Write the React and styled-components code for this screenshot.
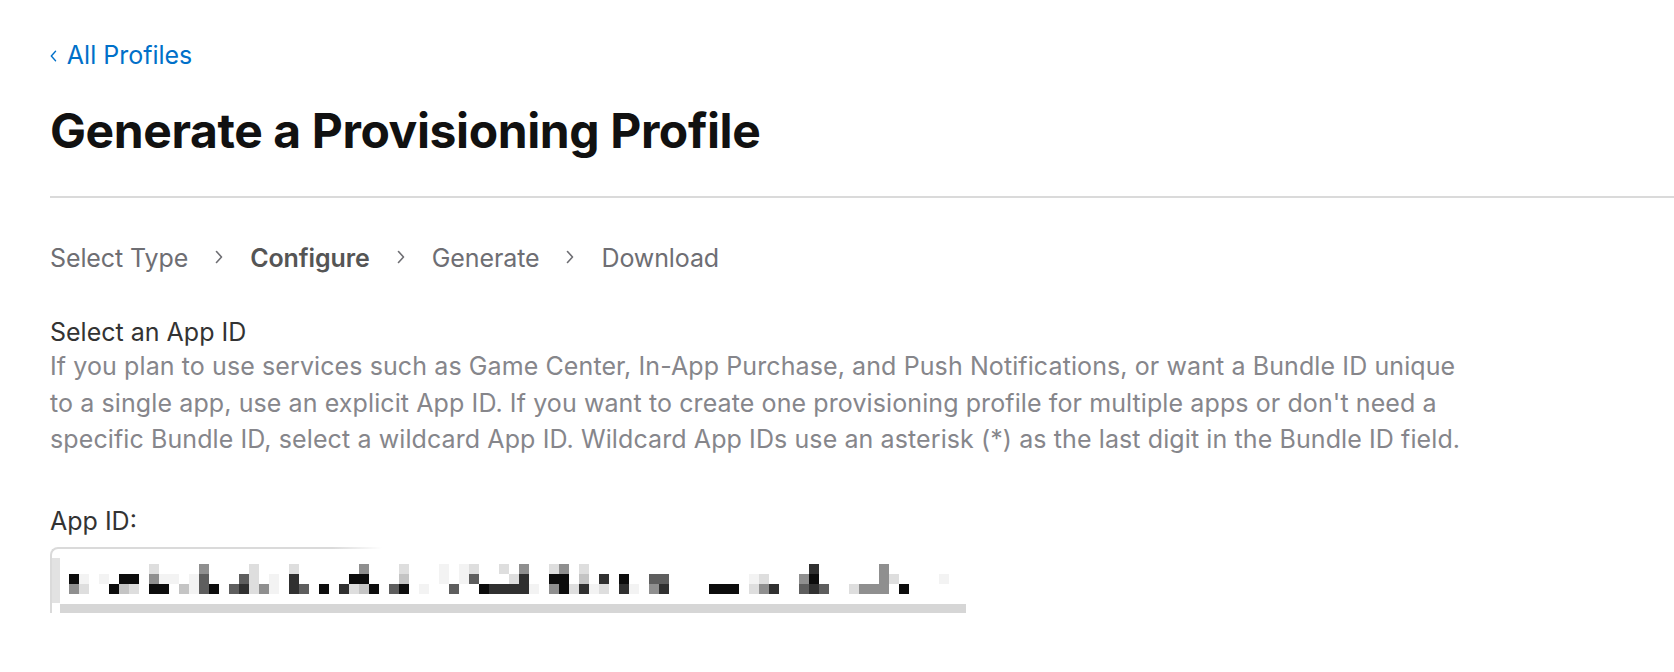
import React from "react"
import styled, { createGlobalStyle } from "styled-components"

const GlobalStyle = createGlobalStyle`
  html, body {
    margin: 0;
    padding: 0;
    background: #fff;
  }
  body {
    font-family: Inter, "Noto Sans", "Liberation Sans", sans-serif;
    -webkit-font-smoothing: antialiased;
  }
`

let Page = styled.main`
  padding: 42px 0 40px 50px;
`

let BackLink = styled.a`
  display: flex;
  align-items: center;
  gap: 10px;
  font-size: 25px;
  line-height: 26px;
  color: #0070c9;
  text-decoration: none;

  svg {
    margin-top: 2px;
  }
`

let Title = styled.h1`
  margin: 35px 0 0 0;
  font-size: 48px;
  line-height: 56px;
  font-weight: 700;
  color: #111;
  letter-spacing: -0.4px;
`

let Divider = styled.hr`
  margin: 37px 0 0 0;
  border: none;
  height: 2px;
  background: #dadada;
`

let Steps = styled.ol`
  display: flex;
  align-items: center;
  gap: 27px;
  margin: 44px 0 0 0;
  padding: 0;
  list-style: none;
`

let Step = styled.li`
  font-size: 25px;
  line-height: 32px;
  letter-spacing: -0.1px;
  color: ${p => p.$active ? "#555" : "#6e6e73"};
  font-weight: ${p => p.$active ? 600 : 400};
`

let Section = styled.section`
  margin-top: 43px;
`

let Label = styled.div`
  font-size: 25px;
  line-height: 31px;
  color: #333;
`

let Description = styled.p`
  margin: 0;
  font-size: 25px;
  line-height: 36.5px;
  letter-spacing: 0.1px;
  color: #86868b;
  white-space: nowrap;
`

let Field = styled.div`
  margin-top: 45px;

  > ${Label} {
    line-height: 36px;
    margin-bottom: 8px;
  }
`

let Frame = styled.div`
  position: relative;
  width: 916px;
  border-top: 2px solid #dadada;
  border-left: 2px solid #dadada;
  border-top-left-radius: 8px;

  &::after {
    content: "";
    position: absolute;
    top: -3px;
    left: 280px;
    right: 0;
    height: 4px;
    background: linear-gradient(to right, rgba(255,255,255,0), #fff 50px);
  }
`

let FrameRow = styled.div`
  display: flex;
  align-items: flex-start;
`

let SideBar = styled.div`
  width: 8px;
  height: 45px;
  margin-top: 9px;
  background: #e2e2e2;
`

let Mosaic = styled.div`
  display: grid;
  grid-template-columns: repeat(88, 10px);
  grid-auto-rows: 10px;
  margin: 15px 0 0 9px;
`

const shades = ["transparent", "#f3f3f3", "#dedede", "#c4c4c4", "#8f8f8f", "#5e5e5e", "#303030", "#0c0c0c"]

let Cell = styled.span`
  display: block;
  background: ${p => shades[p.$shade]};
`

let BottomBar = styled.div`
  width: 906px;
  height: 9px;
  margin: 1px 0 0 8px;
  background: #d6d6d6;
`

// top / middle / bottom rows of the blurred bundle id
const mosaicRows = [
  { 8: 2, 13: 4, 18: 2, 22: 2, 29: 4, 33: 2, 37: 1, 39: 1, 40: 2, 43: 2, 45: 4, 48: 2, 49: 4, 51: 2, 74: 6, 81: 4 },
  { 0: 7, 1: 1, 3: 1, 5: 7, 6: 7, 8: 4, 9: 1, 10: 1, 12: 1, 13: 5, 17: 5, 18: 2, 20: 1, 22: 6, 28: 7, 29: 7, 33: 3, 37: 1, 39: 1, 40: 5, 44: 2, 45: 6, 48: 7, 49: 7, 51: 3, 53: 6, 55: 7, 58: 5, 59: 5, 68: 1, 69: 2, 73: 4, 74: 7, 81: 4, 82: 2, 87: 1 },
  { 0: 4, 1: 2, 4: 7, 5: 3, 6: 2, 8: 7, 9: 7, 11: 3, 12: 1, 13: 5, 14: 7, 16: 5, 17: 6, 18: 2, 19: 4, 20: 1, 22: 6, 23: 5, 25: 7, 27: 6, 28: 2, 29: 3, 30: 7, 32: 5, 33: 7, 35: 1, 38: 5, 41: 7, 42: 6, 43: 6, 44: 6, 45: 6, 46: 1, 48: 4, 49: 7, 50: 2, 51: 6, 52: 1, 53: 2, 55: 6, 56: 1, 58: 4, 59: 6, 64: 7, 65: 7, 66: 7, 68: 2, 69: 4, 70: 6, 73: 5, 74: 6, 75: 5, 78: 2, 79: 4, 80: 4, 81: 4, 83: 7 },
]

function Chevron({ dir = "right", size = 14, color }) {
  let d = dir === "right" ? "M1.5 1.5 L6.5 7 L1.5 12.5" : "M6.5 1.5 L1.5 7 L6.5 12.5"
  return (
    <svg width={size * 8 / 14} height={size} viewBox="0 0 8 14" fill="none">
      <path d={d} stroke={color} strokeWidth="1.6" strokeLinecap="round" strokeLinejoin="round" />
    </svg>
  )
}

const steps = ["Select Type", "Configure", "Generate", "Download"]

export default function App() {
  return (
    <>
      <GlobalStyle />
      <Page>
        <BackLink href="#">
          <Chevron dir="left" size={12} color="#0070c9" />
          All Profiles
        </BackLink>
        <Title>Generate a Provisioning Profile</Title>
        <Divider />

        <Steps>
          {steps.map((s, i) => (
            <React.Fragment key={s}>
              {i > 0 && <li aria-hidden="true"><Chevron size={14} color="#6e6e73" /></li>}
              <Step $active={s === "Configure"}>{s}</Step>
            </React.Fragment>
          ))}
        </Steps>

        <Section>
          <Label>Select an App ID</Label>
          <Description>
            If you plan to use services such as Game Center, In-App Purchase, and Push Notifications, or want a Bundle ID unique<br />
            to a single app, use an explicit App ID. If you want to create one provisioning profile for multiple apps or don't need a<br />
            specific Bundle ID, select a wildcard App ID. Wildcard App IDs use an asterisk (*) as the last digit in the Bundle ID field.
          </Description>
        </Section>

        <Field>
          <Label>App ID:</Label>
          <Frame>
            <FrameRow>
              <SideBar />
              <Mosaic>
                {mosaicRows.map((row, r) =>
                  Array.from({ length: 88 }, (_, c) => (
                    <Cell key={r + "-" + c} $shade={row[c] || 0} />
                  ))
                )}
              </Mosaic>
            </FrameRow>
            <BottomBar />
          </Frame>
        </Field>
      </Page>
    </>
  )
}
